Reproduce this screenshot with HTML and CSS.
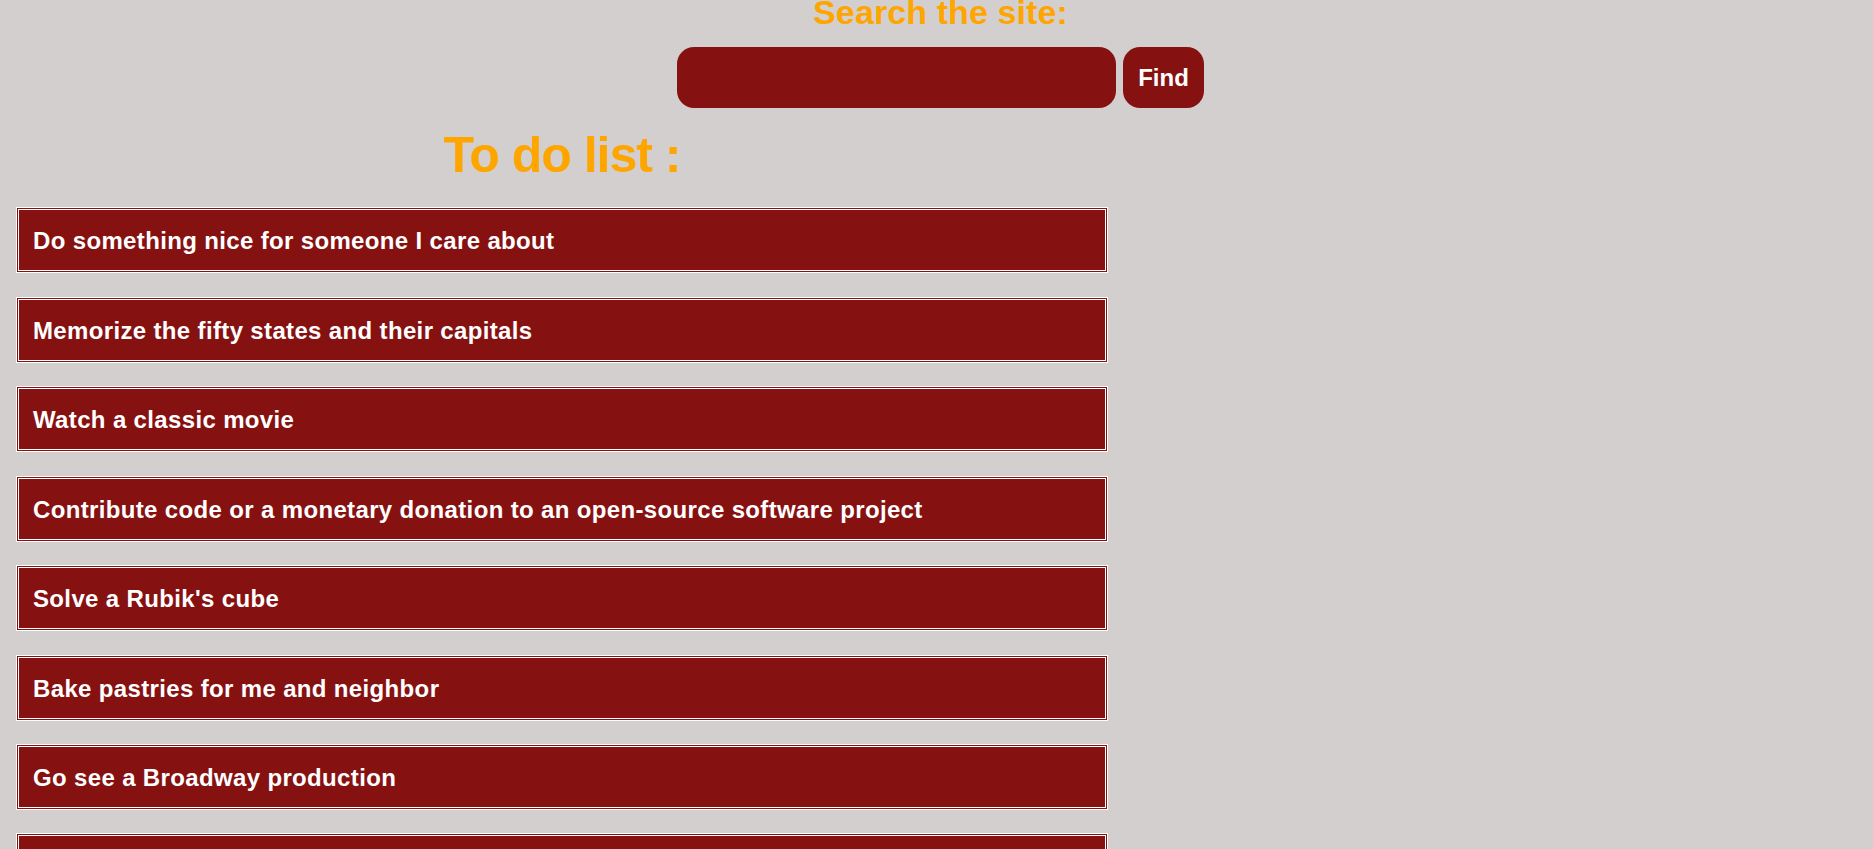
FILE: index.html
```html
<!DOCTYPE html>
<html lang="en">
<head>
<meta charset="utf-8">
<title>To do list</title>
<link rel="stylesheet" href="styles.css">
</head>
<body>
<header class="search">
  <h2 class="search-title">Search the site:</h2>
  <form class="search-form">
    <input class="search-input" type="text" aria-label="Search">
    <button class="search-btn" type="button">Find</button>
  </form>
</header>
<main class="todo">
  <h1 class="todo-title">To do list :</h1>
  <ul class="todo-list">
    <li class="todo-item">Do something nice for someone I care about</li>
    <li class="todo-item">Memorize the fifty states and their capitals</li>
    <li class="todo-item">Watch a classic movie</li>
    <li class="todo-item">Contribute code or a monetary donation to an open-source software project</li>
    <li class="todo-item">Solve a Rubik's cube</li>
    <li class="todo-item">Bake pastries for me and neighbor</li>
    <li class="todo-item">Go see a Broadway production</li>
    <li class="todo-item">Write a thank you letter to an influential person in my life</li>
    <li class="todo-item">Invite some friends over for a game night</li>
    <li class="todo-item">Have a football scrimmage with some friends</li>
  </ul>
</main>
</body>
</html>
```

FILE: styles.css
```css
html, body {
  margin: 0;
  padding: 0;
}

body {
  background: #d3cfce;
  font-family: "Liberation Sans", Arial, sans-serif;
  font-weight: bold;
}

.search {
  display: flex;
  flex-direction: column;
  align-items: center;
  padding-left: 8px;
}

.search-title {
  margin: -7px 0 0;
  font-size: 34px;
  line-height: 39px;
  letter-spacing: 0.1px;
  color: #ffa500;
}

.search-form {
  display: flex;
  gap: 7px;
  margin-top: 15px;
}

.search-input {
  box-sizing: border-box;
  width: 439px;
  height: 61px;
  border: none;
  border-radius: 17px;
  background: #861111;
  color: #fff;
  padding: 0 16px;
  font: inherit;
  font-size: 24px;
  outline: none;
}

.search-btn {
  box-sizing: border-box;
  width: 81px;
  height: 61px;
  border: none;
  border-radius: 17px;
  background: #861111;
  color: #fff;
  font-family: "Liberation Sans", Arial, sans-serif;
  font-weight: bold;
  font-size: 24px;
  padding: 0;
}

.todo {
  width: 1092px;
  margin-left: 16px;
}

.todo-title {
  margin: 19px 0 0;
  text-align: center;
  font-size: 50px;
  line-height: 57px;
  letter-spacing: -1px;
  color: #ffa500;
}

.todo-list {
  list-style: none;
  margin: 23.4px 0 0;
  padding: 0;
  display: flex;
  flex-direction: column;
  gap: 23.43px;
}

.todo-item {
  box-sizing: border-box;
  height: 66px;
  border: 3px double #ffffff;
  background: #861111;
  color: #ffffff;
  font-size: 24px;
  line-height: 26px;
  letter-spacing: 0.35px;
  padding: 18px 14px 16px;
  white-space: nowrap;
}
```
